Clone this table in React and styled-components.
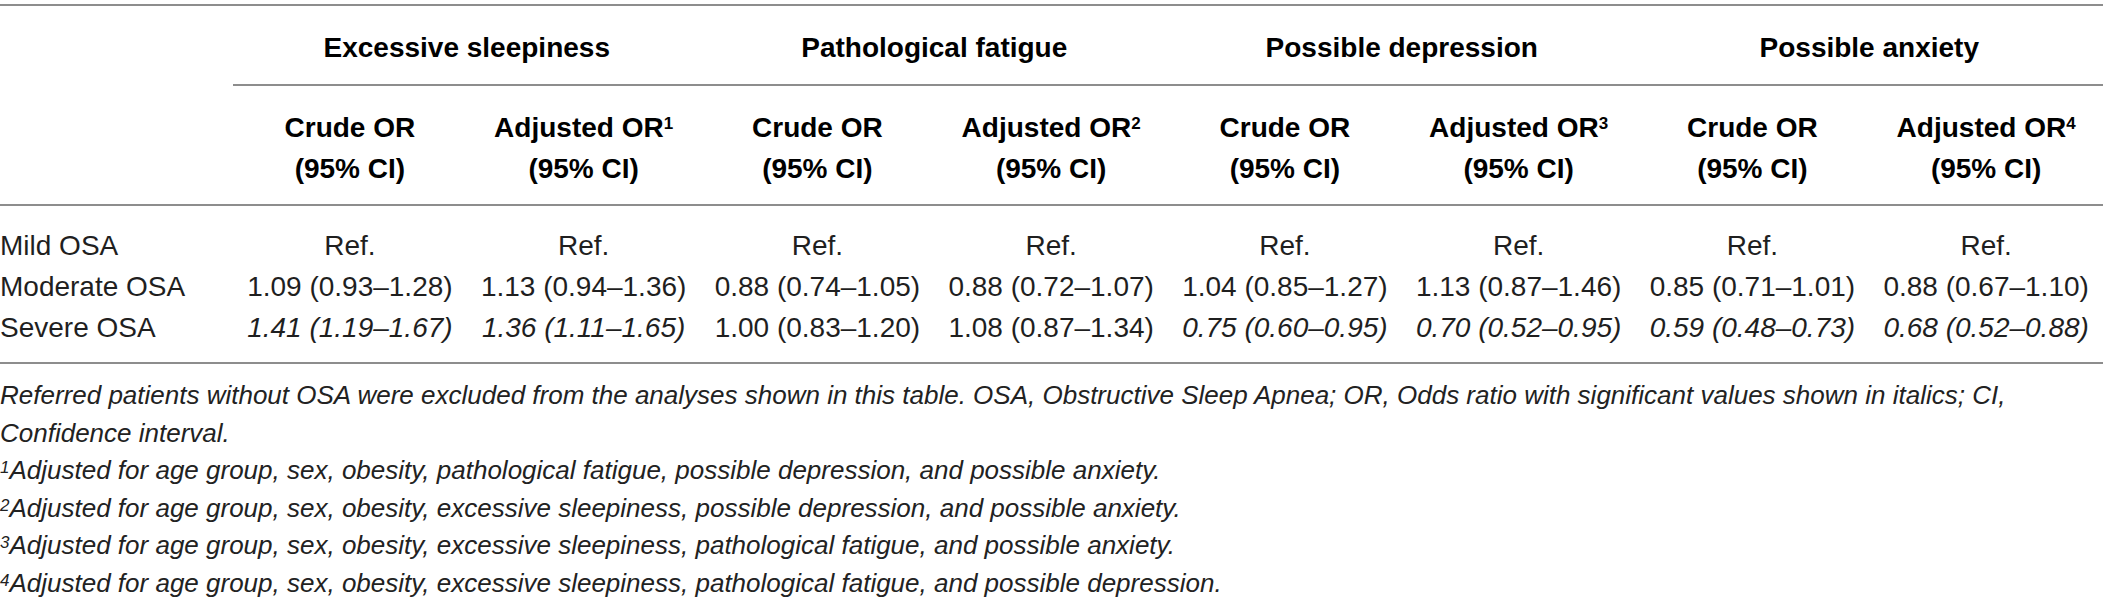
import React from 'react';
import styled, { createGlobalStyle } from 'styled-components';

const GlobalStyle = createGlobalStyle`
  html, body {
    margin: 0;
    padding: 0;
    background: #fff;
  }
  body {
    font-family: "Liberation Sans", Arial, sans-serif;
    color: #1f1f1f;
  }
`;

const COLS = '233px repeat(8, 1fr)';
const RULE = '2px solid #8d8d8d';

const Page = styled.div`
  width: 2103px;
  padding-top: 4px;
`;

const Table = styled.div`
  border-top: ${RULE};
  border-bottom: ${RULE};
`;

const Row = styled.div`
  display: grid;
  grid-template-columns: ${COLS};
  font-size: 28px;
  line-height: 41px;
`;

const GroupRow = styled(Row)`
  padding-top: 21px;
`;

const GroupCell = styled.div`
  grid-column: span 2;
  text-align: center;
  font-weight: 700;
  color: #000;
  padding-bottom: 16px;
  border-bottom: ${RULE};
`;

const HeadRow = styled(Row)`
  padding: 20.5px 0 15.5px;
  border-bottom: ${RULE};
`;

const HeadCell = styled.div`
  text-align: center;
  font-weight: 700;
  color: #000;
`;

const Body = styled.div`
  padding: 18.5px 0 14.5px;
`;

const Label = styled.div`
  text-align: left;
  white-space: nowrap;
`;

const Value = styled.div`
  text-align: center;
  white-space: nowrap;
  font-style: ${p => (p.$italic ? 'italic' : 'normal')};
`;

const Sup = styled.sup`
  font-size: 17px;
  line-height: 0;
  vertical-align: ${p => p.$raise || 8}px;
`;

const Notes = styled.div`
  padding-top: 13px;
  font-size: 26px;
  line-height: 37.5px;
  font-style: italic;
  color: #222;
`;

const Note = styled.p`
  margin: 0;
`;

const groups = ['Excessive sleepiness', 'Pathological fatigue', 'Possible depression', 'Possible anxiety'];

const rows = [
  { label: 'Mild OSA', values: Array(8).fill(['Ref.', false]) },
  {
    label: 'Moderate OSA',
    values: [
      ['1.09 (0.93–1.28)', false],
      ['1.13 (0.94–1.36)', false],
      ['0.88 (0.74–1.05)', false],
      ['0.88 (0.72–1.07)', false],
      ['1.04 (0.85–1.27)', false],
      ['1.13 (0.87–1.46)', false],
      ['0.85 (0.71–1.01)', false],
      ['0.88 (0.67–1.10)', false],
    ],
  },
  {
    label: 'Severe OSA',
    values: [
      ['1.41 (1.19–1.67)', true],
      ['1.36 (1.11–1.65)', true],
      ['1.00 (0.83–1.20)', false],
      ['1.08 (0.87–1.34)', false],
      ['0.75 (0.60–0.95)', true],
      ['0.70 (0.52–0.95)', true],
      ['0.59 (0.48–0.73)', true],
      ['0.68 (0.52–0.88)', true],
    ],
  },
];

const footnotes = [
  'Adjusted for age group, sex, obesity, pathological fatigue, possible depression, and possible anxiety.',
  'Adjusted for age group, sex, obesity, excessive sleepiness, possible depression, and possible anxiety.',
  'Adjusted for age group, sex, obesity, excessive sleepiness, pathological fatigue, and possible anxiety.',
  'Adjusted for age group, sex, obesity, excessive sleepiness, pathological fatigue, and possible depression.',
];

export default function App() {
  return (
    <Page>
      <GlobalStyle />
      <Table>
        <GroupRow>
          <div />
          {groups.map(g => (
            <GroupCell key={g}>{g}</GroupCell>
          ))}
        </GroupRow>
        <HeadRow>
          <div />
          {groups.map((g, i) => (
            <React.Fragment key={g}>
              <HeadCell>
                Crude OR
                <br />
                (95% CI)
              </HeadCell>
              <HeadCell>
                Adjusted OR<Sup>{i + 1}</Sup>
                <br />
                (95% CI)
              </HeadCell>
            </React.Fragment>
          ))}
        </HeadRow>
        <Body>
          {rows.map(r => (
            <Row key={r.label}>
              <Label>{r.label}</Label>
              {r.values.map(([v, it], j) => (
                <Value key={j} $italic={it}>{v}</Value>
              ))}
            </Row>
          ))}
        </Body>
      </Table>
      <Notes>
        <Note>
          Referred patients without OSA were excluded from the analyses shown in this table. OSA, Obstructive Sleep Apnea; OR, Odds ratio with significant values shown in italics; CI, Confidence interval.
        </Note>
        {footnotes.map((f, i) => (
          <Note key={i}>
            <Sup $raise={6}>{i + 1}</Sup>
            {f}
          </Note>
        ))}
      </Notes>
    </Page>
  );
}
